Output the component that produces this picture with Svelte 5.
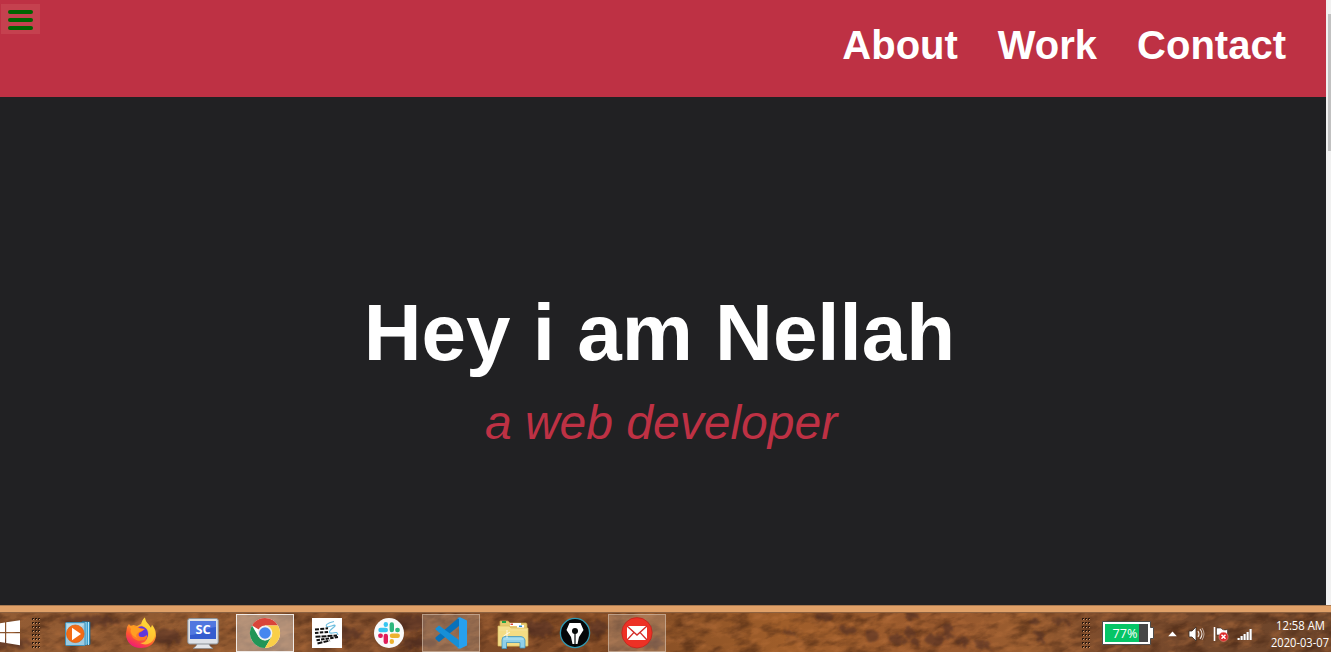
<script>
  const links = ['About', 'Work', 'Contact'];
  const apps = [
    { id: 'player' },
    { id: 'firefox' },
    { id: 'sc' },
    { id: 'chrome', state: 'active' },
    { id: 'keys' },
    { id: 'slack' },
    { id: 'code', state: 'open' },
    { id: 'explorer' },
    { id: 'pen' },
    { id: 'mail', state: 'open' }
  ];
  const gripRows = Array.from({ length: 8 }, (_, i) => i * 4);
  const gripCols = [0, 3, 6];
  const rocks = [
    [8, 30, 24, 5], [90, 8, 30, 5], [165, 24, 16, 8], [345, 20, 20, 5], [410, 10, 16, 8], [418, 30, 20, 5],
    [540, 16, 14, 9], [598, 14, 9, 8], [650, 30, 15, 5],
    [824, 3, 9, 5], [849, 17, 8, 4], [872, 23, 7, 6], [898, 27, 8, 5], [910, 20, 5, 5], [915, 29, 4, 4], [911, 3, 7, 4],
    [935, 27, 10, 6], [948, 18, 5, 9], [962, 28, 7, 5], [982, 31, 8, 5], [1034, 9, 6, 3], [1040, 24, 5, 6], [1060, 8, 9, 3], [789, 20, 6, 3]
  ];
</script>

<div class="screen">
  <div class="viewport">
    <main class="page">
      <header>
        <button class="menu" aria-label="Menu"><i></i><i></i><i></i></button>
        <nav>
          {#each links as link}<a href="#{link}">{link}</a>{/each}
        </nav>
      </header>
      <section class="hero">
        <h1>Hey i am Nellah</h1>
        <p>a web developer</p>
      </section>
    </main>
    <div class="scrollbar"><div class="thumb"></div></div>
  </div>
  <div class="frame"></div>

  <footer class="taskbar">
    <svg class="terrain" viewBox="0 0 1331 39" preserveAspectRatio="none" aria-hidden="true">
      <defs>
        <linearGradient id="ground">
          <stop offset="0" stop-color="#935c34" />
          <stop offset=".17" stop-color="#905930" />
          <stop offset=".3" stop-color="#7c4a2a" />
          <stop offset=".45" stop-color="#824b25" />
          <stop offset=".52" stop-color="#8f5427" />
          <stop offset=".59" stop-color="#a05e2a" />
          <stop offset=".72" stop-color="#98592e" />
          <stop offset=".77" stop-color="#9a5d2f" />
          <stop offset=".83" stop-color="#7b4b2c" />
          <stop offset="1" stop-color="#6b442a" />
        </linearGradient>
        <filter id="grain" x="0" y="0" width="100%" height="100%" color-interpolation-filters="sRGB">
          <feTurbulence type="fractalNoise" baseFrequency=".05 .09" numOctaves="5" seed="12" />
          <feColorMatrix values="0 0 0 0 .24  0 0 0 0 .12  0 0 0 0 .06  2.8 0 0 0 -1.2" />
        </filter>
        <filter id="light" x="0" y="0" width="100%" height="100%" color-interpolation-filters="sRGB">
          <feTurbulence type="fractalNoise" baseFrequency=".07 .12" numOctaves="5" seed="31" />
          <feColorMatrix values="0 0 0 0 .78  0 0 0 0 .48  0 0 0 0 .26  0 2.8 0 0 -1.3" />
        </filter>
        <filter id="rough" x="0" y="0" width="100%" height="100%">
          <feTurbulence type="fractalNoise" baseFrequency=".18" numOctaves="2" seed="4" />
          <feDisplacementMap in="SourceGraphic" scale="12" />
          <feGaussianBlur stdDeviation=".9" />
        </filter>
      </defs>
      <rect width="1331" height="39" fill="url(#ground)" />
      <g transform="skewX(-30)">
        <rect width="1360" height="39" filter="url(#grain)" opacity=".5" />
        <rect width="1360" height="39" filter="url(#light)" opacity=".38" />
      </g>
      <g filter="url(#rough)" fill="#4b2c20" opacity=".55">
        <rect width="1331" height="39" fill="none" />
        {#each rocks as [x, y, rx, ry]}<ellipse cx={x} cy={y} {rx} {ry} />{/each}
      </g>
    </svg>

    <svg class="start" width="20" height="26" viewBox="0 0 20 26" fill="#fff">
      <path d="M0 3.2 5 2.5V12H0ZM6.2 2.3 20 .3V12H6.2ZM0 13.2H5V22.8L0 22ZM6.2 13.2H20V25.2L6.2 23Z" />
    </svg>
    <svg class="grip" width="9" height="31" viewBox="0 0 9 31">
      {#each gripRows as y}{#each gripCols as x}
        <rect {x} {y} width="2" height="2" fill="#2c1a10" /><rect x={x + 1} y={y + 1} width="1" height="1" fill="#d09a70" />
      {/each}{/each}
    </svg>

    <div class="apps">
      {#each apps as app}
        <div class="app {app.state ?? ''}">
          <svg width="32" height="32" viewBox="0 0 32 32">
            {#if app.id === 'player'}
              <path d="M19 4.5 27 5V27.5L19 28.5Z" fill="#3ca0cf" stroke="#1b6087" stroke-width=".7" />
              <path d="M23 5V28M25.5 5V28" stroke="#b8e5f6" />
              <rect x="2.5" y="5.5" width="19.5" height="23" rx="1" fill="#9dcbe1" stroke="#3f91b9" />
              <path d="M4 7H21L16 14 4 20Z" fill="#c3deea" opacity=".7" />
              <circle cx="12.3" cy="16.8" r="8.8" fill="#f26b15" stroke="#db5b0c" stroke-width=".7" />
              <path d="M9 10.7 18 17 9 23.3Z" fill="#fff" />
            {:else if app.id === 'firefox'}
              <defs>
                <linearGradient id="ff" x1=".8" y1="0" x2=".3" y2="1"><stop stop-color="#fff44f" /><stop offset=".4" stop-color="#ffaa27" /><stop offset=".7" stop-color="#ff5630" /><stop offset="1" stop-color="#ee1778" /></linearGradient>
              </defs>
              <path d="M2 10 4 7 6 10 8 8 12 9 16 7C17 4 19 1 20 .5 20 5 24 7 26 11L27 8C31 12 31 17 31 19 30 27 24 31 16 31 7 31 1 25 1 17 1 14 2 12 2 10Z" fill="url(#ff)" />
              <circle cx="16.5" cy="16.5" r="7.2" fill="#6137dc" />
              <path d="M5 9C8 8 12 10 15 11L20 12C18 14 15 15 14 16 12 21 19 21 22 18 23 24 14 26 8 21L5 15Z" fill="#ff7b24" />
              <path d="M4 9C8 8 13 10 15 12L19 12.5 14 15C10 18 11 20 13 21 8 20 5 16 6 12Z" fill="#ff9e22" />
              <path d="M20 .5C16 4 16 8 19 10 23 12 24 17 22 22 20 25 18 26 15 26 22 30 31 25 30 15L27 8 26 11C24 7 20 6 20 .5Z" fill="#ffd535" opacity=".75" />
            {:else if app.id === 'sc'}
              <path d="M11 25H21L23 29 26 31.5H6L9 29Z" fill="#e2e4e7" stroke="#80868d" stroke-width=".6" />
              <rect x=".8" y="1.5" width="30.4" height="25.5" rx="2" fill="#dee1e6" stroke="#8c9299" />
              <rect x="3" y="4" width="26" height="18" fill="#345ccf" />
              <path d="M3 4H29V10C19 11 15 17 3 18Z" fill="#6689ea" opacity=".6" />
              <text x="16" y="17" text-anchor="middle" font-family="Open Sans, sans-serif" font-size="12.8" font-weight="700" fill="#fff">SC</text>
            {:else if app.id === 'chrome'}
              <circle cx="16" cy="16" r="15" fill="#fff" />
              <path d="M16 16 3 8.5A15 15 0 0 1 29 8.5H16Z" fill="#d9453a" />
              <path d="M3 8.5 9.5 19.7 16 23.5 22.5 19.7 16 31A15 15 0 0 1 3 8.5Z" fill="#219557" />
              <path d="M16 8.5H29A15 15 0 0 1 16 31L22.5 19.7Z" fill="#f9cf48" />
              <circle cx="16" cy="16" r="7.4" fill="#f1f1f1" /><circle cx="16" cy="16" r="5.8" fill="#4687ef" />
            {:else if app.id === 'keys'}
              <rect x="1" y="1" width="30" height="30" fill="#fff" />
              <path d="M23 4.5C16 6 13 9 17 10 21 9 25 7 24 9 21 12 17 14 19 16 23 17 26 13 27 18" fill="none" stroke="#6fbfdf" stroke-width="1.1" />
              <g fill="none" stroke="#111" stroke-width="2">
                <path d="M4 12.5 17 11.3" stroke-dasharray="4 1.3" /><path d="M4 16 18 14.8" stroke-dasharray="3.5 1.3" />
                <path d="M4.5 19.8 26 18.5" stroke-dasharray="5 1" /><path d="M5.5 23.3 27 20" stroke-dasharray="3.5 1.1" /><path d="M6.5 26.5 19 23.5" stroke-dasharray="5 1.2" />
              </g>
            {:else if app.id === 'slack'}
              <circle cx="16" cy="16" r="15" fill="#fafafa" />
              <g stroke-width="4.4" stroke-linecap="round">
                <path d="M7.5 13H12.8" stroke="#36c5f0" /><path d="M12.8 7.3V7.7" stroke="#36c5f0" />
                <path d="M18.8 7.5V13" stroke="#2eb67d" /><path d="M24.3 13H24.7" stroke="#2eb67d" />
                <path d="M19 18.8H24.7" stroke="#ecb22e" /><path d="M18.8 24.3V24.7" stroke="#ecb22e" />
                <path d="M12.8 19V24.7" stroke="#e01e5a" /><path d="M7.3 18.8H7.7" stroke="#e01e5a" />
              </g>
            {:else if app.id === 'code'}
              <path d="M24 .5V9L4 25 .5 22V20.5Z" fill="#0871b9" />
              <path d="M.5 11.5 4 8.5 24 23V31.5L.5 12.5Z" fill="#168fd7" />
              <path d="M22 1 25 .3 32 3.5V28.5L25 31.8 22 31 24 30V2Z" fill="#26a0ef" />
            {:else if app.id === 'explorer'}
              <path d="M3 4H11L13 6H29Q30 6 30 8V29H3Z" fill="#e6ca70" stroke="#c9a54b" stroke-width=".7" />
              <path d="M5 4H9V6H5Z" fill="#24a345" /><path d="M13 6H24V9H13Z" fill="#fff" /><path d="M13.5 6.5H16V8H13.5Z" fill="#db4938" />
              <path d="M20 8H27V11H20Z" fill="#fff" /><path d="M22 8.5H25V10H22Z" fill="#238fd6" />
              <path d="M1 9H12L14 11H31V29H1Z" fill="#f5df8f" stroke="#d9ba5d" stroke-width=".7" />
              <path d="M2 14H30V28H2Z" fill="#f4dc84" />
              <path d="M9.5 31.5H5V23Q5 19.5 8 19.5H24Q27 19.5 28 23V31H23V25.5H9.5Z" fill="#8fd0e9" stroke="#4296bd" stroke-width=".8" />
              <path d="M6.5 22H26.5" stroke="#b9e6f5" stroke-width="1" /><path d="M10 13V21M6.5 19 13 15" stroke="#fff" stroke-width=".8" />
            {:else if app.id === 'pen'}
              <circle cx="16" cy="16" r="14.6" fill="#050608" stroke="#3198b1" stroke-width="1.3" />
              <path d="M10.5 6H21.5L24.5 13 20 20 18.5 27H13.5L12 20 7.5 13Z" fill="#fff" />
              <circle cx="16" cy="14" r="3" fill="#07090a" /><path d="M16 16V27" stroke="#07090a" stroke-width="1.2" />
            {:else}
              <circle cx="16" cy="15.8" r="15.2" fill="#ed3125" stroke="#bb221d" stroke-width=".7" />
              <path d="M6 9H26V23H6Z" fill="#fff" /><path d="M6 9 16 18 26 9M6 23 13 15.4M26 23 19 15.4" fill="none" stroke="#d32c28" stroke-width="1.4" />
            {/if}
          </svg>
        </div>
      {/each}
    </div>

    <div class="tray">
      <svg width="9" height="31" viewBox="0 0 9 31">
        {#each gripRows as y}{#each gripCols as x}
          <rect {x} {y} width="2" height="2" fill="#2c1a10" /><rect x={x + 1} y={y + 1} width="1" height="1" fill="#d09a70" />
        {/each}{/each}
      </svg>
      <svg class="battery" width="52" height="24" viewBox="0 0 52 24">
        <path d="M.5.5H48.5V6.5H51.5V17.5H48.5V23.5H.5Z" fill="#fff" stroke="#4d4b49" />
        <rect x="3" y="3" width="43" height="18" fill="#464646" /><rect x="3" y="3" width="34" height="18" fill="#06c566" />
        <text x="10.5" y="17" font-family="Open Sans, sans-serif" font-size="13" textLength="25" lengthAdjust="spacingAndGlyphs" fill="#fff">77%</text>
      </svg>
      <svg class="caret" width="9" height="6" viewBox="0 0 9 6"><path d="M.2 5.2 4.5 .5 8.8 5.2Z" fill="#fff" /></svg>
      <svg class="speaker" width="17" height="16" viewBox="0 0 17 16">
        <path d="M1 5H4L8 1V15L4 11H1Z" fill="#fff" stroke="#352922" stroke-width=".8" /><path d="M10 5Q12 8 10 11M12 3Q16 8 12 13" fill="none" stroke="#f0e7e2" stroke-width="1.1" /><path d="M14 2Q18 8 14 14" fill="none" stroke="#f0e7e2" stroke-opacity=".6" />
      </svg>
      <svg class="flag" width="17" height="17" viewBox="0 0 17 17">
        <path d="M1.5 1V15" stroke="#fff" stroke-width="1.6" /><path d="M3.5 2H8Q10 5 14.5 3.5V10Q9 11 8 9H3.5Z" fill="#fff" stroke="#352922" stroke-width=".6" />
        <circle cx="10.5" cy="10.8" r="4.6" fill="#dc2929" stroke="#eca094" stroke-width=".5" /><path d="m8.5 8.8 4 4m0-4-4 4" stroke="#fff" stroke-width="1.5" />
      </svg>
      <svg class="signal" width="16" height="13" viewBox="0 0 16 13">
        {#each [2, 4, 6, 8, 11] as h, i}<rect x={i * 3} y={12 - h} width="3" height={h} fill="#3c281d" opacity=".7" /><rect x={i * 3 + .5} y={12 - h} width="2.2" height={h} fill="#fff" />{/each}
      </svg>
      <svg class="clock" width="62" height="39" viewBox="0 0 62 39">
        <text x="8" y="17" textLength="49" lengthAdjust="spacingAndGlyphs">12:58 AM</text>
        <text x="3" y="34" textLength="58" lengthAdjust="spacingAndGlyphs">2020-03-07</text>
      </svg>
    </div>
  </footer>
</div>

<style>
  :global(body) { margin: 0; overflow: hidden; }
  .screen { display: flex; flex-direction: column; width: 1331px; height: 652px; font-family: "Liberation Sans", Arial, sans-serif; background: #212123; }
  .viewport { display: flex; height: 605px; }
  .page { width: 1326px; }
  header { display: flex; justify-content: space-between; align-items: flex-start; height: 97px; box-sizing: border-box; background: #be3144; }
  .menu { display: flex; flex-direction: column; gap: 4px; width: 39px; height: 30px; margin: 4px 0 0 1px; padding: 6px 7px 4px; border: 0; background: #c5414f; }
  .menu i { width: 25px; height: 4px; flex: none; border-radius: 2px; background: #006400; }
  nav { display: flex; gap: 40px; padding: 22px 40px 0 0; }
  nav a { color: #fff; font-size: 40px; line-height: 46px; font-weight: 700; text-decoration: none; }
  .hero { display: flex; flex-direction: column; align-items: center; padding-top: 190px; }
  h1 { margin: 0 7px 0 0; font-size: 80px; line-height: 92px; color: #fff; }
  p { margin: 16px 4px 0 0; font-size: 48px; line-height: 55px; font-style: italic; color: #be3144; }
  .scrollbar { width: 5px; box-sizing: border-box; padding: 14px 0 0 2px; background: #f1f1f1; }
  .thumb { height: 137px; background: #c1c1c1; }
  .frame { height: 8px; box-sizing: border-box; border-top: 1px solid #aa7b52; border-bottom: 1px solid #8c6140; background: #e1a168; }
  .taskbar { position: relative; display: flex; height: 39px; overflow: hidden; }
  .taskbar > * { position: relative; flex: none; }
  .taskbar .terrain { position: absolute; inset: 0; width: 100%; height: 39px; }
  .start { margin-top: 7px; }
  .grip { margin: 5px 0 0 12px; }
  .apps { display: flex; gap: 4px; padding: 1px 0 0 9px; }
  .app { display: flex; justify-content: center; align-items: center; width: 58px; height: 38px; box-sizing: border-box; border: 1px solid transparent; }
  .active { border-color: #fff9; outline: 1px solid #fff8; outline-offset: -1px; background: #d8c9bf80; }
  .open { border-color: #d8c2ae99; background: #cdb8a84d; }
  .tray { display: flex; align-items: flex-start; padding: 5px 0 0 416px; }
  .battery { margin: 3px 0 0 11px; }
  .caret { margin: 13px 0 0 14px; }
  .speaker { margin: 8px 0 0 11px; }
  .flag { margin: 8px 0 0 8px; }
  .signal { margin: 10px 0 0 7px; }
  .clock { margin: -5px 0 0 15px; fill: #fff; font: 12.5px "Open Sans", sans-serif; }
</style>
